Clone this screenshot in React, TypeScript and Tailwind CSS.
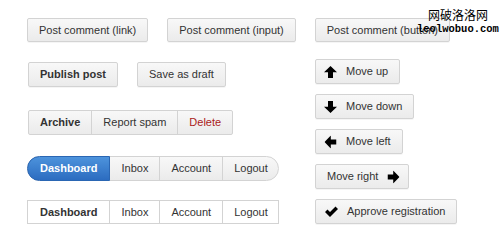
const btn =
  "h-6 px-[11px] flex items-center gap-[9px] rounded-[2px] border border-[#d3d3d3] bg-gradient-to-b from-[#f8f8f8] to-[#ebebeb] text-[11px] text-[#333] shadow-[0_1px_0_rgba(0,0,0,0.04)]";

const seg = "h-full flex items-center px-[11px] text-[11px] text-[#333]";

function Arrow({ rotate }: { rotate: string }) {
  return (
    <svg viewBox="0 0 13 12" className={`w-[13px] h-[12px] ${rotate}`}>
      <path d="M6.5 0 L13 6.3 L9 6.3 L9 12 L4 12 L4 6.3 L0 6.3 Z" fill="#000" />
    </svg>
  );
}

function Check() {
  return (
    <svg viewBox="0 0 13 11" className="w-[13px] h-[11px]">
      <path d="M0 6 L2.5 3.5 L5 6 L10.5 0.5 L13 3 L5 11 Z" fill="#000" />
    </svg>
  );
}

export default function App() {
  return (
    <div className="relative w-[500px] h-[250px] bg-white overflow-hidden" style={{ fontFamily: '"Liberation Sans", Arial, sans-serif' }}>
      {/* watermark */}
      <div className="absolute left-[417px] top-[9px] flex flex-col items-center leading-none">
        <span className="text-[12px] text-black" style={{ fontFamily: '"Noto Sans CJK SC", sans-serif' }}>网破洛洛网</span>
        <span className="mt-[3px] text-[10.5px] font-bold text-black" style={{ fontFamily: '"Liberation Mono", monospace' }}>leolwobuo.com</span>
      </div>

      <div className="pt-[18px] pl-[27px]">
        <div className="flex gap-[19px]">
          <button className={btn}>Post comment (link)</button>
          <button className={btn}>Post comment (input)</button>
          <button className={btn}>Post comment (button)</button>
        </div>

        <div className="flex">
          <div className="w-[288px] flex flex-col">
            <div className="mt-[20px] flex gap-[19px] pl-px">
              <button className={`${btn} h-[25px] font-bold px-3`}>Publish post</button>
              <button className={`${btn} h-[25px] px-3`}>Save as draft</button>
            </div>

            <div className="mt-[23px] ml-px flex h-[25px] w-fit rounded-[2px] border border-[#d3d3d3] bg-gradient-to-b from-[#f8f8f8] to-[#ebebeb]">
              <span className={`${seg} font-bold px-3`}>Archive</span>
              <span className={`${seg} border-l border-[#d3d3d3] px-3`}>Report spam</span>
              <span className={`${seg} border-l border-[#d3d3d3] px-3 text-[#aa1a1a]`}>Delete</span>
            </div>

            <div className="mt-[21px] flex h-[25px] w-fit rounded-full border border-[#d3d3d3] bg-gradient-to-b from-[#f8f8f8] to-[#ebebeb]">
              <span className="h-[25px] -my-px -ml-px flex items-center px-[12px] rounded-l-full border border-[#2a66b3] bg-gradient-to-b from-[#4d93dc] to-[#2c6cc0] text-[11px] font-bold text-white">
                Dashboard
              </span>
              <span className={seg}>Inbox</span>
              <span className={`${seg} border-l border-[#d3d3d3]`}>Account</span>
              <span className={`${seg} border-l border-[#d3d3d3] pr-[10px]`}>Logout</span>
            </div>

            <div className="mt-[19px] flex h-6 w-fit border border-[#d3d3d3] bg-white">
              <span className={`${seg} font-bold px-[12px]`}>Dashboard</span>
              <span className={`${seg} border-l border-[#d3d3d3]`}>Inbox</span>
              <span className={`${seg} border-l border-[#d3d3d3]`}>Account</span>
              <span className={`${seg} border-l border-[#d3d3d3] pr-[10px]`}>Logout</span>
            </div>
          </div>

          <div className="flex flex-col gap-[10px] mt-[17px]">
            <button className={`${btn} h-[25px] w-fit pl-[8px]`}>
              <Arrow rotate="" />
              Move up
            </button>
            <button className={`${btn} h-[25px] w-fit pl-[8px]`}>
              <Arrow rotate="rotate-180" />
              Move down
            </button>
            <button className={`${btn} h-[25px] w-fit pl-[8px]`}>
              <Arrow rotate="-rotate-90" />
              Move left
            </button>
            <button className={`${btn} h-[25px] w-fit pr-[8px] gap-[7px]`}>
              Move right
              <Arrow rotate="rotate-90" />
            </button>
            <button className={`${btn} h-[25px] w-fit pl-[9px]`}>
              <Check />
              Approve registration
            </button>
          </div>
        </div>
      </div>
    </div>
  );
}
